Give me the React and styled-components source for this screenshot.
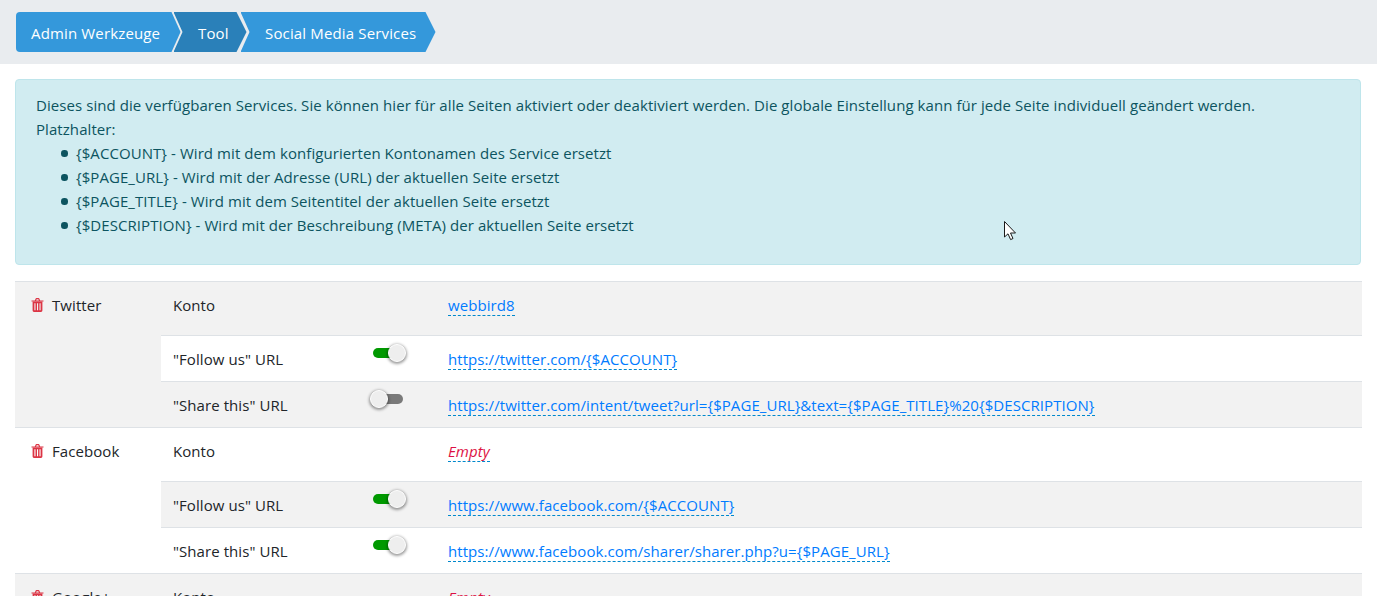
import React from 'react';
import styled, { createGlobalStyle } from 'styled-components';

const GlobalStyle = createGlobalStyle`
    html, body {
        margin: 0;
        height: 596px;
        overflow: hidden;
        background: #fff;
        color: #212529;
        font-family: "Open Sans", "Noto Sans", sans-serif;
        font-size: 15px;
        line-height: 24px;
        letter-spacing: 0.07px;
    }
`;

const TopBar = styled.nav`
    height: 64px;
    box-sizing: border-box;
    padding: 12px 16px;
    background: #e9ecef;
    display: flex;
`;

const Crumb = styled.a`
    height: 40px;
    display: flex;
    align-items: center;
    box-sizing: border-box;
    flex: none;
    width: ${(p) => p.$width}px;
    padding: 2px 0 0 ${(p) => p.$pad}px;
    margin-left: ${(p) => p.$overlap || 0}px;
    color: #fff;
    letter-spacing: 0.15px;
    background: ${(p) => (p.$dark ? '#2a80b9' : '#3498db')};
    border-radius: ${(p) => (p.$first ? '4px 0 0 4px' : 0)};
    clip-path: ${(p) =>
        p.$first
            ? 'polygon(0 0, calc(100% - 9px) 0, 100% 50%, calc(100% - 9px) 100%, 0 100%)'
            : 'polygon(0 0, calc(100% - 10px) 0, 100% 50%, calc(100% - 10px) 100%, 0 100%, 9px 50%)'};
`;

const Content = styled.main`
    padding: 15px 15px 0;
`;

const Alert = styled.div`
    box-sizing: border-box;
    height: 186px;
    width: 1346px;
    padding: 13px 20px 0;
    background: #d1ecf1;
    border: 1px solid #bee5eb;
    border-radius: 4px;
    color: #0c5460;
`;

const Placeholders = styled.ul`
    margin: 0;
    padding-left: 40px;
    list-style: none;
`;

const Placeholder = styled.li`
    position: relative;

    &::before {
        content: '';
        position: absolute;
        left: -15px;
        top: 9px;
        width: 6.5px;
        height: 6.5px;
        border-radius: 50%;
        background: #0c5460;
    }
`;

const Table = styled.table`
    width: 1347px;
    margin-top: 16px;
    border-collapse: collapse;
    table-layout: fixed;
`;

const Row = styled.tr`
    &:nth-child(odd) {
        background: #f2f2f2;
    }
`;

const Cell = styled.td`
    box-sizing: border-box;
    height: ${(p) => (p.$tall ? 54 : 46)}px;
    padding: 11px 12px 0 ${(p) => p.$left || 12}px;
    vertical-align: top;
    border-top: 1px solid #dee2e6;
`;

const ServiceName = styled.span`
    display: flex;
    align-items: center;
    gap: 8px;
`;

const TrashIcon = styled.svg`
    flex: none;
    width: 13px;
    height: 14px;
    fill: #dc3545;
`;

const EditLink = styled.a`
    color: ${(p) => (p.$empty ? '#dd1144' : '#007bff')};
    font-style: ${(p) => (p.$empty ? 'italic' : 'normal')};
    border-bottom: 1px dashed #0088cc;
`;

const Toggle = styled.span`
    display: block;
    position: relative;
    width: 30px;
    height: 10px;
    margin-top: 1px;
    border-radius: 5px;
    background: ${(p) => (p.$on ? '#009900' : '#7a7a7a')};
`;

const Knob = styled.span`
    position: absolute;
    top: -4px;
    left: ${(p) => (p.$on ? 15 : -3)}px;
    width: 18px;
    height: 18px;
    box-sizing: border-box;
    border-radius: 50%;
    background: #eee;
    border: 1px solid #fff;
    box-shadow: 0 1px 3px 1px rgba(0, 0, 0, 0.4);
`;

const Pointer = styled.svg`
    position: absolute;
    left: 1004px;
    top: 221px;
`;

const placeholders = [
    '{$ACCOUNT} - Wird mit dem konfigurierten Kontonamen des Service ersetzt',
    '{$PAGE_URL} - Wird mit der Adresse (URL) der aktuellen Seite ersetzt',
    '{$PAGE_TITLE} - Wird mit dem Seitentitel der aktuellen Seite ersetzt',
    '{$DESCRIPTION} - Wird mit der Beschreibung (META) der aktuellen Seite ersetzt',
];

const services = [
    {
        name: 'Twitter',
        account: 'webbird8',
        follow: 'https://twitter.com/{$ACCOUNT}',
        followOn: true,
        share: 'https://twitter.com/intent/tweet?url={$PAGE_URL}&text={$PAGE_TITLE}%20{$DESCRIPTION}',
        shareOn: false,
    },
    {
        name: 'Facebook',
        follow: 'https://www.facebook.com/{$ACCOUNT}',
        followOn: true,
        share: 'https://www.facebook.com/sharer/sharer.php?u={$PAGE_URL}',
        shareOn: true,
    },
    {
        name: 'Google+',
    },
];

function Trash() {
    return (
        <TrashIcon viewBox="0 0 13 14">
            <path d="M0.5 2.4h12v1.2h-12zM3.8 2.4l0.9-1.9a0.8 0.8 0 0 1 0.7-0.5h2.2a0.8 0.8 0 0 1 0.7 0.5l0.9 1.9h-1.3l-0.6-1.2h-1.6l-0.6 1.2z" />
            <path
                fillRule="evenodd"
                d="M1.6 3.6h9.8v9a1.4 1.4 0 0 1-1.4 1.4h-7a1.4 1.4 0 0 1-1.4-1.4zM3.4 5.2v7h1.1v-7zM6 5.2v7h1.1v-7zM8.5 5.2v7h1.1v-7z"
            />
        </TrashIcon>
    );
}

function UrlRow({ label, url, on }) {
    return (
        <Row>
            <Cell>{label}</Cell>
            <Cell>
                <Toggle $on={on}>
                    <Knob $on={on} />
                </Toggle>
            </Cell>
            <Cell>
                <EditLink>{url}</EditLink>
            </Cell>
        </Row>
    );
}

function Service({ service }) {
    return (
        <>
            <Row>
                <Cell rowSpan={service.follow ? 3 : 1} $left={16}>
                    <ServiceName>
                        <Trash />
                        {service.name}
                    </ServiceName>
                </Cell>
                <Cell colSpan={2} $tall>
                    Konto
                </Cell>
                <Cell $tall>
                    <EditLink $empty={!service.account}>{service.account || 'Empty'}</EditLink>
                </Cell>
            </Row>
            {service.follow && (
                <>
                    <UrlRow label={'"Follow us" URL'} url={service.follow} on={service.followOn} />
                    <UrlRow label={'"Share this" URL'} url={service.share} on={service.shareOn} />
                </>
            )}
        </>
    );
}

export default function App() {
    return (
        <>
            <GlobalStyle />
            <TopBar>
                <Crumb $first $width={164.5} $pad={15}>Admin Werkzeuge</Crumb>
                <Crumb $dark $width={73} $pad={24.5} $overlap={-7}>Tool</Crumb>
                <Crumb $width={195} $pad={24.5} $overlap={-6}>Social Media Services</Crumb>
            </TopBar>
            <Content>
                <Alert>
                    Dieses sind die verfügbaren Services. Sie können hier für alle Seiten aktiviert oder deaktiviert
                    werden. Die globale Einstellung kann für jede Seite individuell geändert werden.
                    <br />
                    Platzhalter:
                    <Placeholders>
                        {placeholders.map((text) => (
                            <Placeholder key={text}>{text}</Placeholder>
                        ))}
                    </Placeholders>
                </Alert>
                <Table>
                    <colgroup>
                        <col width="146" />
                        <col width="200" />
                        <col width="75" />
                        <col />
                    </colgroup>
                    <tbody>
                        {services.map((service) => (
                            <Service key={service.name} service={service} />
                        ))}
                    </tbody>
                </Table>
            </Content>
            <Pointer width="14" height="20" viewBox="0 0 14 20">
                <path d="M0.5 0.5 V16 L4 12.8 L6.6 18.6 L9 17.5 L6.5 12 H11.5 Z" fill="#fff" stroke="#1a1a1a" strokeWidth="1" />
            </Pointer>
        </>
    );
}
